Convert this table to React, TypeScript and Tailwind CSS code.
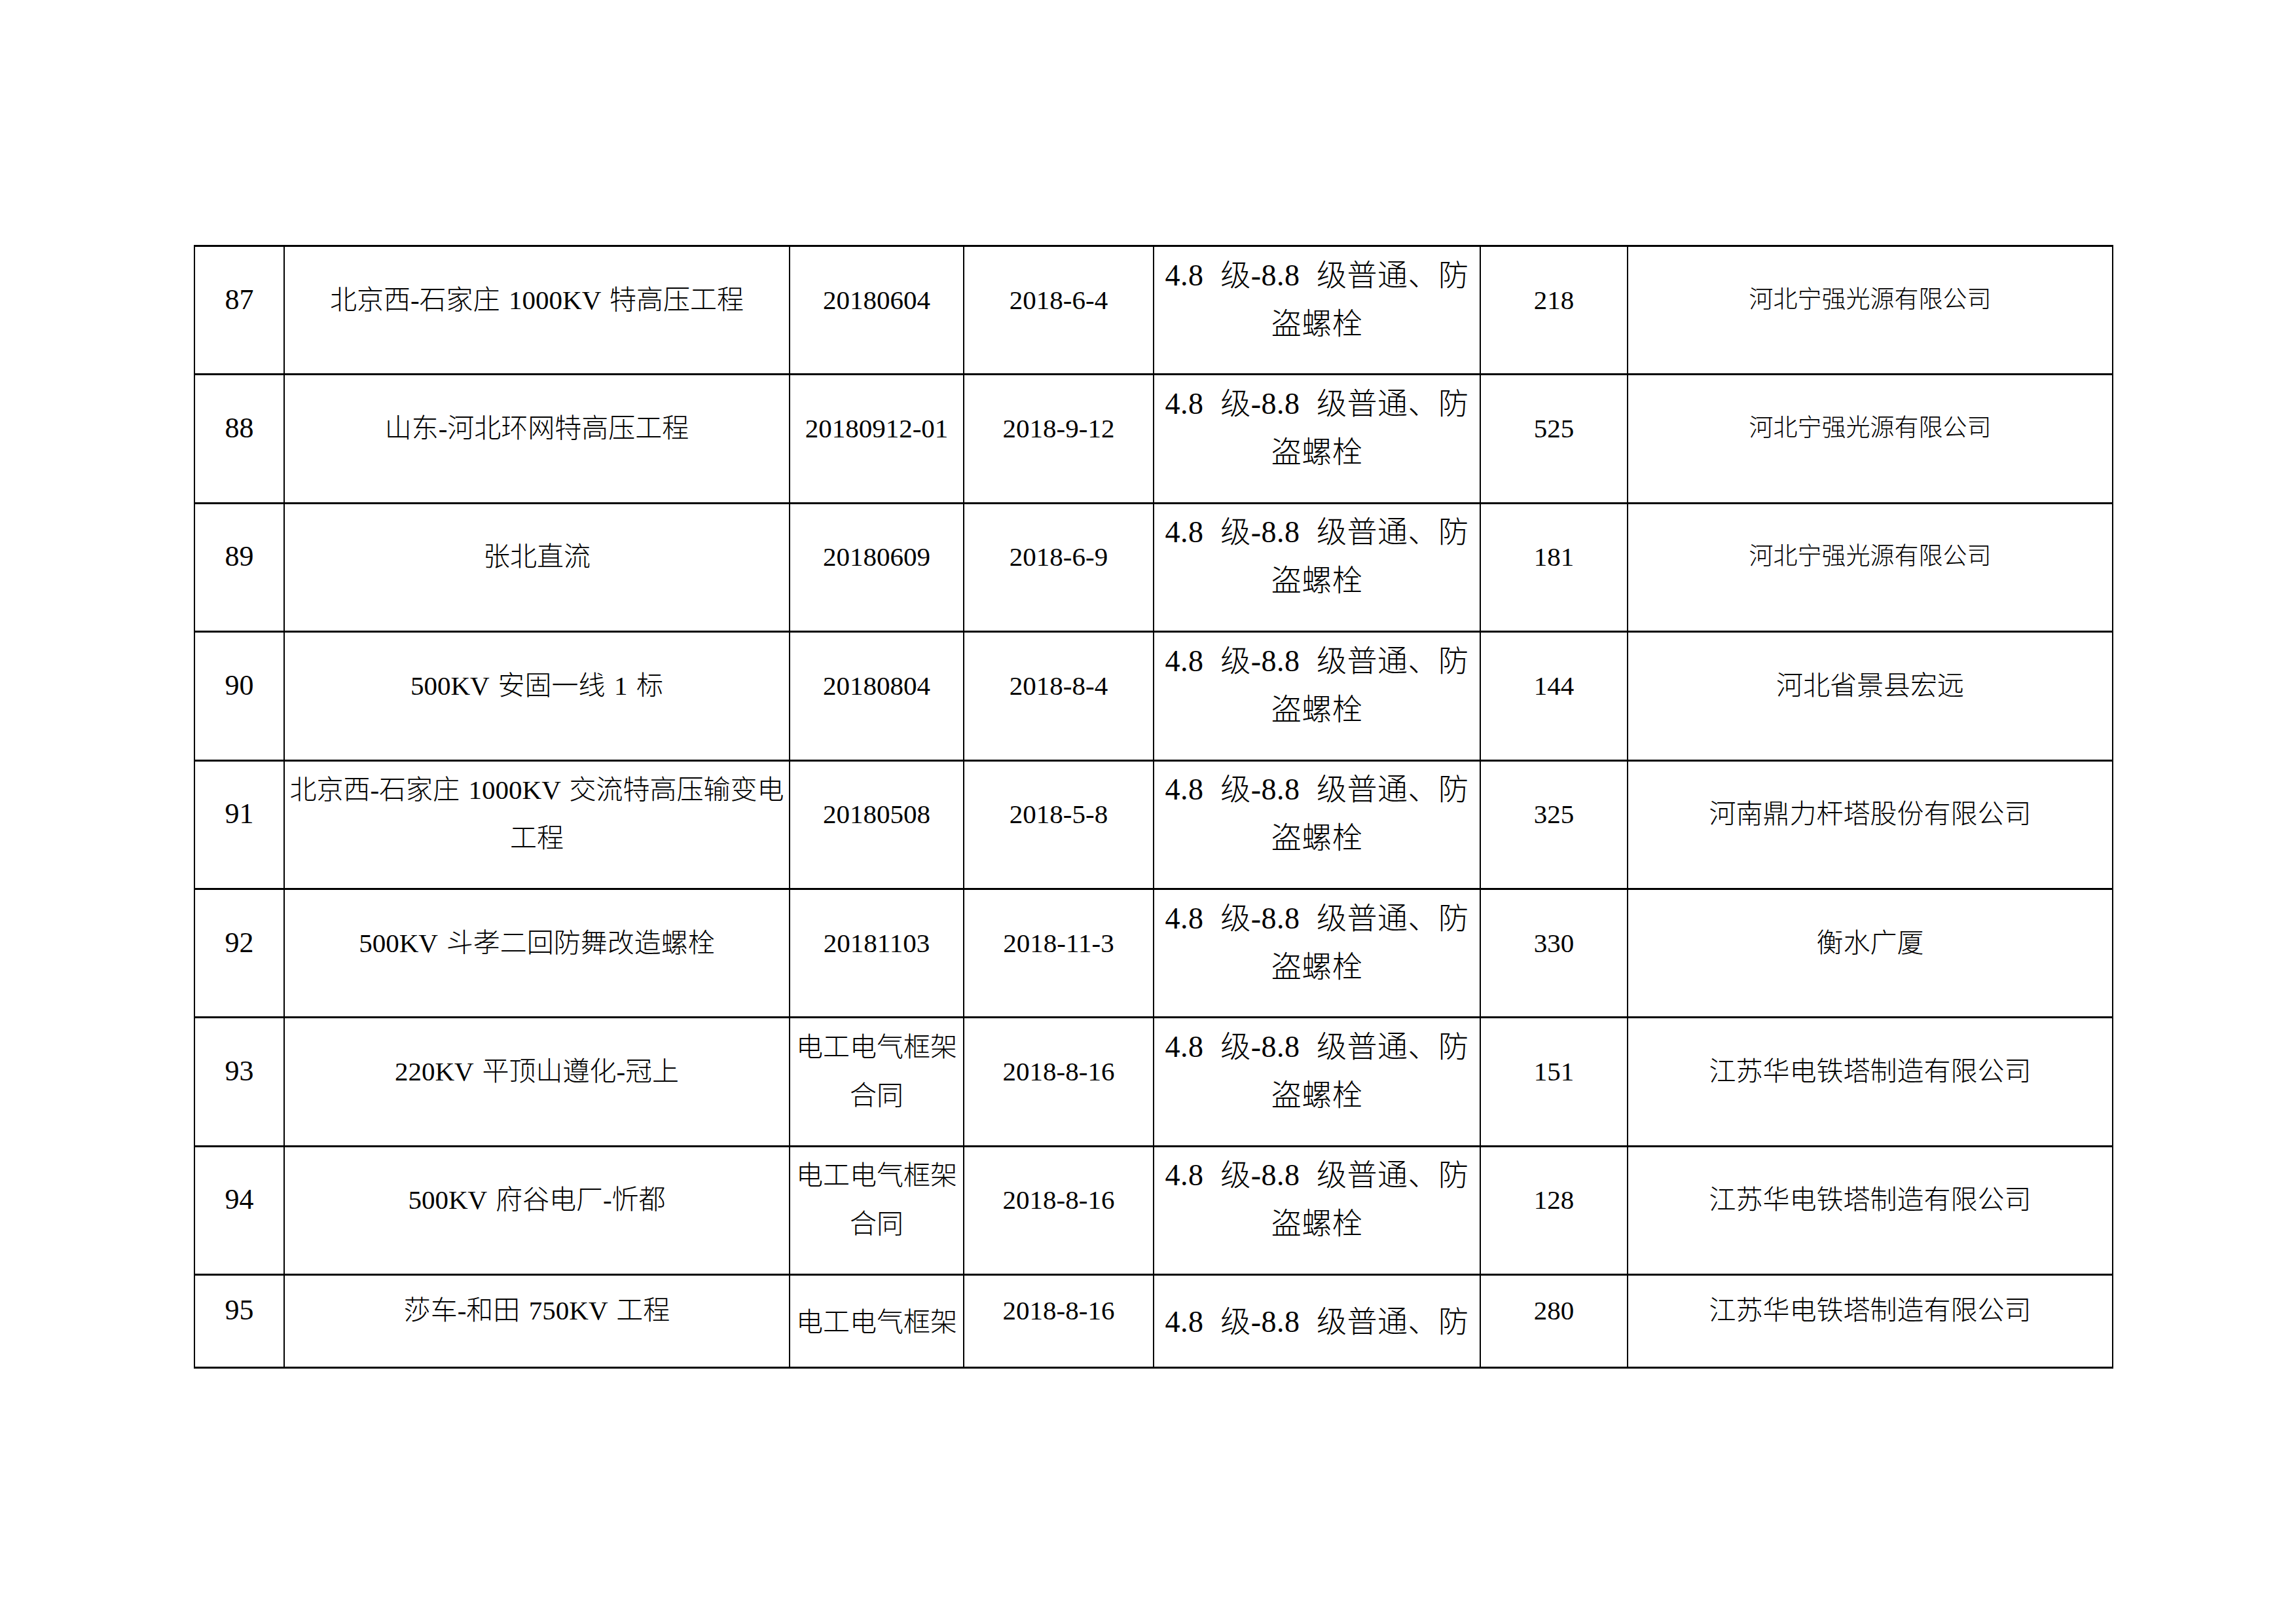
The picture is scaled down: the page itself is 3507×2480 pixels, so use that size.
import React from "react";

type Row = {
  n: string;
  name: string[];
  code: string[];
  date: string;
  amt: string;
  co: string;
  coSmall?: boolean;
};

const SPEC = ["4.8 级-8.8 级普通、防", "盗螺栓"];
const HB = "河北宁强光源有限公司";
const JS = "江苏华电铁塔制造有限公司";
const FRAME = ["电工电气框架", "合同"];

const rows: Row[] = [
  { n: "87", name: ["北京西-石家庄 1000KV 特高压工程"], code: ["20180604"], date: "2018-6-4", amt: "218", co: HB, coSmall: true },
  { n: "88", name: ["山东-河北环网特高压工程"], code: ["20180912-01"], date: "2018-9-12", amt: "525", co: HB, coSmall: true },
  { n: "89", name: ["张北直流"], code: ["20180609"], date: "2018-6-9", amt: "181", co: HB, coSmall: true },
  { n: "90", name: ["500KV 安固一线 1 标"], code: ["20180804"], date: "2018-8-4", amt: "144", co: "河北省景县宏远" },
  { n: "91", name: ["北京西-石家庄 1000KV 交流特高压输变电", "工程"], code: ["20180508"], date: "2018-5-8", amt: "325", co: "河南鼎力杆塔股份有限公司" },
  { n: "92", name: ["500KV 斗孝二回防舞改造螺栓"], code: ["20181103"], date: "2018-11-3", amt: "330", co: "衡水广厦" },
  { n: "93", name: ["220KV 平顶山遵化-冠上"], code: FRAME, date: "2018-8-16", amt: "151", co: JS },
  { n: "94", name: ["500KV 府谷电厂-忻都"], code: FRAME, date: "2018-8-16", amt: "128", co: JS },
];

const cellBase =
  "shrink-0 flex flex-col justify-center items-center text-center border-r-2 border-b-[3px] border-black leading-[74px] text-black whitespace-nowrap";

function Lines({ lines }: { lines: string[] }) {
  return (
    <>
      {lines.map((l, i) => (
        <div key={i}>{l}</div>
      ))}
    </>
  );
}

function FullRow({ r }: { r: Row }) {
  return (
    <div className="flex h-[196.4px]">
      <div className={`${cellBase} w-[137px] pb-[32px] text-[44px]`}>{r.n}</div>
      <div className={`${cellBase} w-[772px] pb-[32px] text-[41px] [word-spacing:0.08em]`}>
        <Lines lines={r.name} />
      </div>
      <div className={`${cellBase} w-[266px] pb-[32px] text-[41px]`}>
        <Lines lines={r.code} />
      </div>
      <div className={`${cellBase} w-[290px] pb-[32px] text-[41px]`}>{r.date}</div>
      <div className={`${cellBase} w-[499px] pb-[32px] text-[46px] [word-spacing:0.3em] tracking-[0.01em]`}>
        <Lines lines={SPEC} />
      </div>
      <div className={`${cellBase} w-[225px] pb-[32px] text-[41px]`}>{r.amt}</div>
      <div className={`${cellBase} w-[741px] pb-[32px] ${r.coSmall ? "text-[37px]" : "text-[41px]"}`}>{r.co}</div>
    </div>
  );
}

function LastRow() {
  return (
    <div className="flex h-[142px]">
      <div className={`${cellBase} w-[137px] pb-[34px] text-[44px]`}>95</div>
      <div className={`${cellBase} w-[772px] pb-[34px] text-[41px] [word-spacing:0.08em]`}>莎车-和田 750KV 工程</div>
      <div className={`${cellBase} w-[266px] !justify-start pt-[34px] text-[41px]`}>电工电气框架</div>
      <div className={`${cellBase} w-[290px] pb-[34px] text-[41px]`}>2018-8-16</div>
      <div className={`${cellBase} w-[499px] !justify-start pt-[34px] text-[46px] [word-spacing:0.3em] tracking-[0.01em]`}>4.8 级-8.8 级普通、防</div>
      <div className={`${cellBase} w-[225px] pb-[34px] text-[41px]`}>280</div>
      <div className={`${cellBase} w-[741px] pb-[34px] text-[41px]`}>{JS}</div>
    </div>
  );
}

export default function App() {
  return (
    <div className="w-[3507px] h-[2480px] bg-white pt-[374px] pl-[296px] font-light font-['Liberation_Serif','Noto_Sans_CJK_SC',serif]">
      <div className="flex flex-col w-fit border-l-2 border-t-[3px] border-black">
        {rows.map((r) => (
          <FullRow key={r.n} r={r} />
        ))}
        <LastRow />
      </div>
    </div>
  );
}
